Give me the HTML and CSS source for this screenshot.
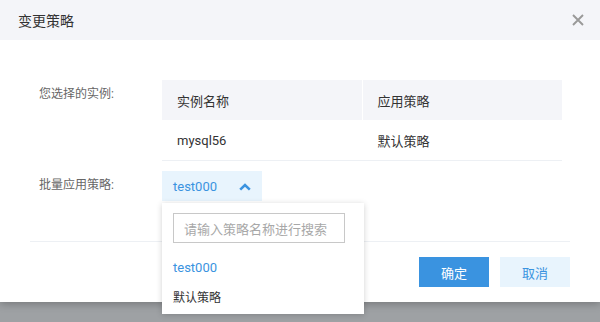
FILE: index.html
```html
<!DOCTYPE html>
<html lang="zh">
<head>
<meta charset="utf-8">
<link rel="stylesheet" href="styles.css">
</head>
<body>
<div class="modal">
  <div class="modal-header">
    <span class="modal-title">变更策略</span>
    <svg class="close" width="12" height="12" viewBox="0 0 12 12"><path d="M1 1L11 11M11 1L1 11" stroke="#999" stroke-width="1.9" fill="none"/></svg>
  </div>
  <div class="modal-body">
    <div class="form-row">
      <div class="label">您选择的实例:</div>
      <div class="table">
        <div class="tr th">
          <div class="cell">实例名称</div>
          <div class="cell">应用策略</div>
        </div>
        <div class="tr td">
          <div class="cell">mysql56</div>
          <div class="cell">默认策略</div>
        </div>
      </div>
    </div>
    <div class="form-row row2">
      <div class="label">批量应用策略:</div>
      <div class="select-wrap">
        <div class="select">
          <span>test000</span>
          <svg width="12" height="8" viewBox="0 0 12 8"><path d="M1.2 6.6L6 2L10.8 6.6" stroke="#3a93e0" stroke-width="2.6" fill="none"/></svg>
        </div>
        <div class="dropdown">
          <div class="search"><span class="placeholder">请输入策略名称进行搜索</span></div>
          <div class="option active">test000</div>
          <div class="option">默认策略</div>
        </div>
      </div>
    </div>
  </div>
  <div class="modal-footer">
    <button class="btn primary">确定</button>
    <button class="btn cancel">取消</button>
  </div>
</div>
</body>
</html>
```
FILE: styles.css
```css
* { box-sizing: border-box; }
html, body { margin: 0; padding: 0; }
body {
  background: #9ea1a4;
  height: 322px;
  overflow: hidden;
  font-family: Roboto, "Noto Sans CJK SC", sans-serif;
}
.modal {
  width: 600px;
  background: #fff;
  box-shadow: 0 2px 8px rgba(0,0,0,0.25);
  position: relative;
}
.modal-header {
  height: 40px;
  background: #f4f5f9;
  display: flex;
  align-items: center;
  justify-content: space-between;
  padding: 0 16px 0 18px;
}
.modal-title {
  font-size: 14px;
  color: #333;
}
.close { display: block; }
.modal-body {
  padding: 40px 38px 0 0;
}
.form-row {
  display: flex;
}
.label {
  width: 162px;
  padding-left: 39px;
  font-size: 12px;
  line-height: 29px;
  color: #666;
  flex-shrink: 0;
}
.table {
  width: 400px;
  border-bottom: 1px solid #edf0f4;
}
.tr {
  display: flex;
  height: 40px;
  align-items: center;
}
.th { background: #f4f5f9; }
.cell {
  flex: 1;
  height: 100%;
  display: flex;
  align-items: center;
  padding-left: 15px;
  font-size: 13px;
  color: #333;
}
.th .cell:first-child { border-right: 1px solid #fff; }
.td .cell:first-child { border-right: 1px solid transparent; }
.row2 { margin-top: 10px; }
.select-wrap { position: relative; }
.select {
  width: 100px;
  height: 30px;
  background: #e8f4fd;
  display: flex;
  align-items: center;
  justify-content: space-between;
  padding: 0 11px 0 11px;
  font-size: 13px;
  color: #3a93e0;
}
.select svg { margin-top: 1px; }
.dropdown {
  position: absolute;
  top: 32px;
  left: 0;
  width: 202px;
  background: #fff;
  box-shadow: 0 1px 6px rgba(0,0,0,0.18);
  padding: 10px 0 1px;
  z-index: 5;
}
.search {
  margin-left: 11px;
  width: 172px;
  height: 30px;
  border: 1px solid #c8c8c8;
  display: flex;
  align-items: center;
  padding-left: 10px;
  margin-bottom: 10px;
}
.placeholder {
  font-size: 13px;
  color: #a8a8a8;
}
.option {
  height: 30px;
  line-height: 30px;
  padding-left: 11px;
  font-size: 12px;
  color: #333;
}
.option.active {
  color: #3a93e0;
  font-size: 13px;
}
.modal-footer {
  margin: 40px 30px 0;
  border-top: 1px solid #edf0f4;
  padding: 15px 0 15px;
  display: flex;
  justify-content: flex-end;
  gap: 11px;
}
.btn {
  width: 70px;
  height: 30px;
  border: none;
  font-family: Roboto, "Noto Sans CJK SC", sans-serif;
  font-size: 13px;
  padding: 0;
}
.primary { background: #3a93e0; color: #fff; }
.cancel { background: #e8f4fd; color: #3a93e0; }
```
